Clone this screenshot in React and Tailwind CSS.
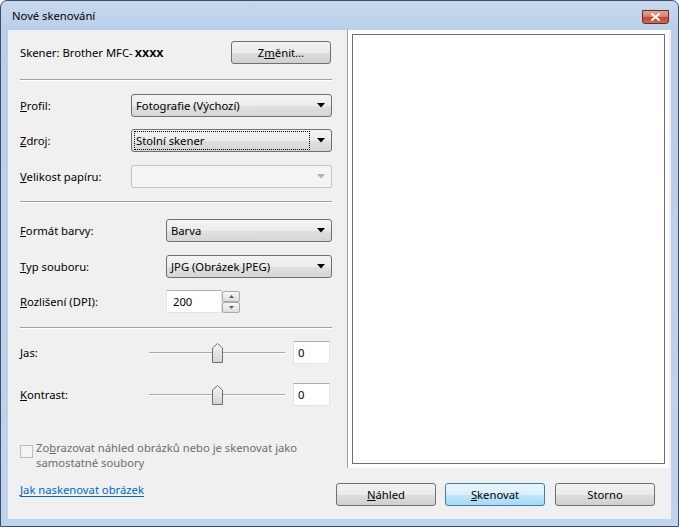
import React from "react";

const font = "font-['Noto_Sans',sans-serif]";

function Arrow({ disabled }) {
  return (
    <svg width="8" height="5" viewBox="0 0 8 5" className="shrink-0">
      <path d="M0 0 H8 L4 4.5 Z" fill={disabled ? "#b0b0b0" : "#000"} />
    </svg>
  );
}

function Combo({ value, focused, disabled }) {
  if (disabled) {
    return (
      <div className="h-[23px] w-full rounded-[2px] border border-[#c2c5c8] bg-[#f4f4f4] flex items-center justify-end pr-[6px]">
        <Arrow disabled />
      </div>
    );
  }
  return (
    <div className="h-[23px] w-full rounded-[3px] border border-[#707070] bg-[linear-gradient(#f4f4f4_0%,#ececec_50%,#e0e0e0_51%,#d6d6d6_100%)] flex items-center pl-[2px] pr-[6px]">
      {focused ? (
        <div className="flex-1 h-[19px] border border-dotted border-black flex items-center pl-[1px] mr-[7px] text-black">
          {value}
        </div>
      ) : (
        <div className="flex-1 pl-[2px] text-black">{value}</div>
      )}
      <Arrow />
    </div>
  );
}

function Sep() {
  return <div className="h-[2px] border-t border-[#a0a0a0] bg-white" />;
}

function Thumb() {
  return (
    <svg width="11" height="20" viewBox="0 0 11 20" className="absolute top-0" style={{ left: 63 }}>
      <defs>
        <linearGradient id="tg" x1="0" y1="0" x2="0" y2="1">
          <stop offset="0" stopColor="#f6f6f6" />
          <stop offset="1" stopColor="#d4d4d4" />
        </linearGradient>
      </defs>
      <path d="M0.5 19.5 V5 L5.5 0.5 L10.5 5 V19.5 Z" fill="url(#tg)" stroke="#707070" />
    </svg>
  );
}

function Slider() {
  return (
    <div className="relative w-[136px] h-[20px]">
      <div className="absolute left-0 right-0 top-[9px] h-[2px] border-t border-[#a9a9a9] bg-white" />
      <Thumb />
    </div>
  );
}

function Button({ children, primary }) {
  return (
    <div
      className={
        primary
          ? "w-[100px] h-[23px] rounded-[3px] border border-[#3c7fb1] bg-[linear-gradient(#eaf6fd_0%,#d9f0fc_50%,#bee6fd_51%,#a7d9f5_100%)] flex items-center justify-center text-black"
          : "w-[100px] h-[23px] rounded-[3px] border border-[#707070] bg-[linear-gradient(#f2f2f2_0%,#ebebeb_50%,#dddddd_51%,#cfcfcf_100%)] flex items-center justify-center text-black"
      }
    >
      {children}
    </div>
  );
}

function SpinBtn({ up }) {
  return (
    <div className="h-[11px] rounded-[2px] border border-[#a9a9a9] bg-[linear-gradient(#f7f7f7,#dcdcdc)] flex items-center justify-center">
      <svg width="5" height="3" viewBox="0 0 5 3">
        <path d={up ? "M0 3 L2.5 0 L5 3 Z" : "M0 0 L2.5 3 L5 0 Z"} fill="#4d6185" />
      </svg>
    </div>
  );
}

export default function App() {
  return (
    <div className={`w-[679px] h-[527px] bg-white ${font} text-[11.25px] leading-none`}>
      <div className="w-full h-full rounded-t-[7px] border border-[#404f60] bg-[linear-gradient(#c6d8ee_0px,#b9cfe9_30px,#bed3ec_100%)] flex flex-col overflow-hidden">
        {/* title bar */}
        <div className="h-[29px] shrink-0 flex items-center justify-between pl-[11px] pr-[9px]">
          <span className="text-black pt-[1px]">Nové skenování</span>
          <div className="w-[27px] h-[14px] mt-[3px] rounded-b-[3px] border border-[#6b2b24] bg-[linear-gradient(#e4a393_0%,#d88170_45%,#c5452f_55%,#d3694f_100%)] flex items-center justify-center">
            <svg width="9" height="8" viewBox="0 0 9 8">
              <path d="M1 1 L8 7 M8 1 L1 7" stroke="#fff" strokeWidth="2" strokeLinecap="square" />
            </svg>
          </div>
        </div>

        {/* client */}
        <div className="mx-[7px] h-[489px] bg-[#f0f0f0] flex">
          {/* left form */}
          <div className="w-[328px] pl-[12px] pr-[4px] flex flex-col">
            <div className="mt-[11px] h-[23px] flex items-center justify-between">
              <span className="text-black">
                Skener: Brother MFC-<span className="font-['Liberation_Sans',sans-serif] font-bold text-[13px] pl-[2px]">xxxx</span>
              </span>
              <div className="mr-[1px]">
                <Button>
                  Z<u>m</u>ěnit...
                </Button>
              </div>
            </div>

            <div className="mt-[15px]"><Sep /></div>

            <div className="mt-[13px] h-[23px] flex items-center">
              <span className="w-[111px]"><u>P</u>rofil:</span>
              <div className="flex-1"><Combo value="Fotografie (Výchozí)" /></div>
            </div>
            <div className="mt-[12px] h-[23px] flex items-center">
              <span className="w-[111px]"><u>Z</u>droj:</span>
              <div className="flex-1"><Combo value="Stolní skener" focused /></div>
            </div>
            <div className="mt-[13px] h-[23px] flex items-center">
              <span className="w-[111px]"><u>V</u>elikost papíru:</span>
              <div className="flex-1"><Combo disabled /></div>
            </div>

            <div className="mt-[13px]"><Sep /></div>

            <div className="mt-[16px] h-[23px] flex items-center">
              <span className="w-[146px]"><u>F</u>ormát barvy:</span>
              <div className="flex-1"><Combo value="Barva" /></div>
            </div>
            <div className="mt-[13px] h-[23px] flex items-center">
              <span className="w-[146px]"><u>T</u>yp souboru:</span>
              <div className="flex-1"><Combo value="JPG (Obrázek JPEG)" /></div>
            </div>
            <div className="mt-[12px] h-[23px] flex items-center">
              <span className="w-[146px]"><u>R</u>ozlišení (DPI):</span>
              <div className="w-[56px] h-[23px] bg-white border border-[#e3e3e3] border-t-[#abadb3] flex items-center pl-[6px]">200</div>
              <div className="w-[18px] h-[23px] flex flex-col justify-center gap-[0px]">
                <SpinBtn up />
                <SpinBtn />
              </div>
            </div>

            <div className="mt-[14px]"><Sep /></div>

            <div className="mt-[12px] h-[23px] flex items-center">
              <span className="w-[129px]"><u>J</u>as:</span>
              <Slider />
              <div className="ml-[8px] w-[37px] h-[23px] bg-white border border-[#e3e3e3] border-t-[#abadb3] flex items-center pl-[4px]">0</div>
            </div>
            <div className="mt-[19px] h-[23px] flex items-center">
              <span className="w-[129px]"><u>K</u>ontrast:</span>
              <Slider />
              <div className="ml-[8px] w-[37px] h-[23px] bg-white border border-[#e3e3e3] border-t-[#abadb3] flex items-center pl-[4px]">0</div>
            </div>

            <div className="mt-[34px] flex items-start text-[#6d6d6d]">
              <div className="mt-[5px] w-[13px] h-[13px] border border-[#bcbcbc] bg-[#f4f4f4] shrink-0" />
              <div className="ml-[3px] leading-[15px]">
                <span>
                  Zo<u>b</u>razovat náhled obrázků nebo je skenovat jako
                </span>
                <br />
                <span>samostatné soubory</span>
              </div>
            </div>

            <div className="mt-[14px] text-[#0066cc] underline underline-offset-2">Jak naskenovat obrázek</div>
          </div>

          {/* right side */}
          <div className="flex-1 flex flex-col">
            <div className="ml-[11px] mr-[2px] h-[438px] bg-white border-l border-[#a0a0a0] p-[4px]">
              <div className="w-full h-full border border-[#6d6d6d] bg-white" />
            </div>
            <div className="mt-[15px] flex">
              <Button>
                <u>N</u>áhled
              </Button>
              <div className="ml-[9px]">
                <Button primary>
                  <u>S</u>kenovat
                </Button>
              </div>
              <div className="ml-[10px]">
                <Button>Storno</Button>
              </div>
            </div>
          </div>
        </div>
      </div>
    </div>
  );
}
